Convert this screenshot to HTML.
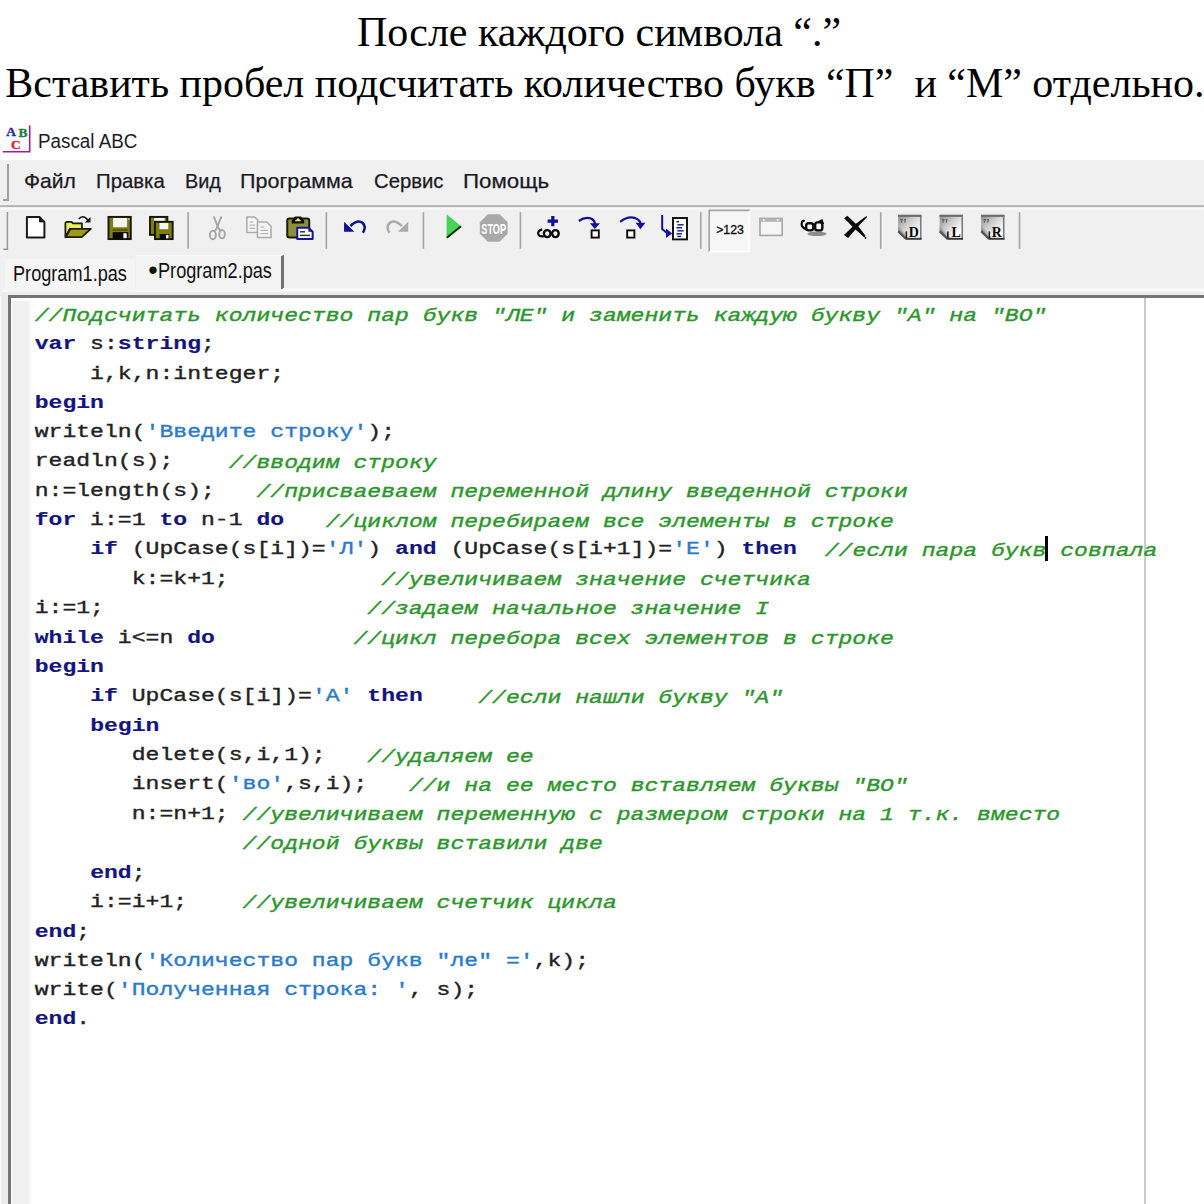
<!DOCTYPE html>
<html><head><meta charset="utf-8">
<style>
html,body{margin:0;padding:0;background:#fff;}
body{width:1204px;height:1204px;position:relative;overflow:hidden;font-family:"Liberation Sans",sans-serif;}
.h{position:absolute;font-family:"Liberation Serif",serif;font-size:42px;line-height:52px;color:#000;white-space:pre;}
#h1{left:356.9px;top:5.5px;}
#h2{left:5.3px;top:56.8px;font-size:41.94px;}
#title{position:absolute;left:37.6px;top:128.9px;font-size:19.5px;line-height:24px;color:#1c1c2c;white-space:pre;transform-origin:0 0;transform:scaleX(0.965);}
#menubar{position:absolute;left:0;top:160px;width:1204px;height:46px;background:#f0f0f0;}
#menubar span{position:absolute;top:9.1px;font-size:20.4px;-webkit-text-stroke:0.25px;line-height:24px;color:#1a1a24;white-space:pre;transform-origin:0 0;}
.grip{position:absolute;background:#a0a0a0;}
#toolbar{position:absolute;left:0;top:204.6px;width:1204px;height:50.4px;background:#f0f0f0;}
#tabs{position:absolute;left:0;top:255px;width:1204px;height:41px;background:#f0f0f0;}
.tab{position:absolute;font-size:22.4px;line-height:24px;color:#111;white-space:pre;transform-origin:0 0;transform:scaleX(0.81);}
#editor{position:absolute;left:7.5px;top:295.4px;width:1197px;height:909px;background:#fff;border-left:3px solid #757575;border-top:3.3px solid #757575;box-sizing:border-box;}
#gutter{position:absolute;left:0;top:3px;width:22px;height:908px;background:linear-gradient(to right,#fafafa 0,#f0f0f0 2.6px,#f0f0f0 16.4px,#fff 21.6px);}
#margin{position:absolute;left:1133.2px;top:0;width:2px;height:908px;background:#cbcbcb;}
pre{position:absolute;left:24.2px;top:1.5px;margin:0;font-family:"Liberation Mono",monospace;font-size:23.1px;line-height:36.27px;color:#222;transform:scaleY(0.81);transform-origin:0 0;-webkit-text-stroke:0.45px;}
.k{color:#14147e;font-weight:bold;-webkit-text-stroke:0.2px;}
.c{color:#2c962c;font-style:italic;position:relative;top:1.7px;}
.s{color:#2a7acc;}
#app{position:absolute;left:0;top:0;width:1204px;height:1204px;}
#caret{position:absolute;left:1044.7px;top:536px;width:3.2px;height:25.4px;background:#050505;}
</style></head><body>
<div class="h" id="h1">После каждого символа “.”</div>
<div class="h" id="h2">Вставить пробел подсчитать количество букв “П”  и “М” отдельно.</div>
<div id="app">
<svg style="position:absolute;left:0;top:120px" width="40" height="40" viewBox="0 120 40 40">
<path d="M29.7 125.6V151.7H2.7" fill="none" stroke="#a21aa2" stroke-width="1.6"/>
<text x="6.2" y="135.8" font-family="Liberation Serif,serif" font-weight="bold" font-size="13.4" fill="#2e2ea0" stroke="#2e2ea0" stroke-width="0.4">A</text>
<text x="18.4" y="137.4" font-family="Liberation Serif,serif" font-weight="bold" font-size="13.4" fill="#1e8040" stroke="#1e8040" stroke-width="0.4">B</text>
<text x="11" y="149.2" font-family="Liberation Serif,serif" font-weight="bold" font-size="13.4" fill="#e0202e" stroke="#e0202e" stroke-width="0.4">C</text>
</svg>
<div id="title">Pascal ABC</div>
<div id="menubar">
<div class="grip" style="left:7px;top:3.7px;width:1.6px;height:37px"></div>
<div class="grip" style="left:3px;top:39.3px;width:5.6px;height:1.5px"></div>
<span style="left:24.4px;transform:scaleX(1.035)">Файл</span><span style="left:95.6px;transform:scaleX(0.998)">Правка</span><span style="left:185px;transform:scaleX(0.975)">Вид</span><span style="left:240px;transform:scaleX(1.055)">Программа</span><span style="left:374.4px;transform:scaleX(0.995)">Сервис</span><span style="left:463.2px;transform:scaleX(1.095)">Помощь</span></div>
<div id="toolbar">
<svg style="position:absolute;left:0;top:0" width="1204" height="50.4" viewBox="0 204.6 1204 50.4">
<rect x="0" y="204.8" width="1204" height="2.1" fill="#b2b2b2"/>
<rect x="0" y="206.9" width="1204" height="2.4" fill="#f8f8f8"/>
<!-- grip -->
<path d="M7.3 211.6V248.8H3.3" fill="none" stroke="#989898" stroke-width="1.5"/>
<!-- separators -->
<g stroke="#a4a4a4" stroke-width="1.6">
<path d="M188 211.8V248.4"/><path d="M326.3 211.8V248.4"/><path d="M423.4 211.8V248.4"/><path d="M520.4 211.8V248.4"/><path d="M700.8 211.8V248.4"/><path d="M880.8 211.8V248.4"/><path d="M1019.6 211.8V248.4"/>
</g>
<!-- new -->
<path d="M26.8 216.6H39.4L44.3 221.5V237H26.8Z" fill="#fff" stroke="#1a1a1a" stroke-width="2" stroke-linejoin="round"/>
<path d="M39.4 216.6V221.5H44.3Z" fill="#1a1a1a" stroke="#1a1a1a" stroke-width="1"/>
<!-- open -->
<path d="M65.3 236.8V222.6L66.5 221.4H71.5L72.8 222.9H81.8V228.4H69.8Z" fill="#ecec5c" stroke="#1c1c00" stroke-width="1.8" stroke-linejoin="round"/>
<path d="M65.6 236.8L70.4 228.4H90.8L81.6 236.8Z" fill="#9c9c10" stroke="#1c1c00" stroke-width="1.8" stroke-linejoin="round"/>
<path d="M78.6 218.6Q82.6 214.4 86.4 218.2L88.6 220.4" fill="none" stroke="#111" stroke-width="1.6"/>
<path d="M90.4 216.6V222.2H84.6Z" fill="#111"/>
<!-- save -->
<rect x="108.4" y="216.5" width="22.3" height="22.2" fill="#7e7e0e" stroke="#161600" stroke-width="1.9"/>
<rect x="113" y="217.6" width="14" height="9.2" fill="#f6f6f6"/>
<rect x="112.4" y="229" width="15.4" height="1.3" fill="#4a4a08"/>
<rect x="112.6" y="231.7" width="15.6" height="7" fill="#0a0a0a"/>
<rect x="123.3" y="232.8" width="3.3" height="5" fill="#fff"/>
<rect x="128.2" y="218" width="1.2" height="1.4" fill="#e8e8e8"/>
<!-- save all -->
<rect x="149.9" y="216.5" width="17.4" height="18" fill="#7e7e0e" stroke="#161600" stroke-width="1.9"/>
<rect x="154" y="217.6" width="10.6" height="3" fill="#f6f6f6"/>
<rect x="154.9" y="221.4" width="17.7" height="17.3" fill="#7e7e0e" stroke="#161600" stroke-width="1.9"/>
<rect x="159.4" y="222.6" width="8.8" height="6.2" fill="#f6f6f6"/>
<rect x="159.6" y="233.6" width="9.6" height="5.2" fill="#0a0a0a"/>
<rect x="166" y="234.4" width="2.4" height="3.6" fill="#fff"/>
<!-- cut (disabled) -->
<g fill="none" stroke="#a6a6a6" stroke-width="1.9">
<path d="M213.6 216L218.6 228.4"/><path d="M221.4 216L216.4 228.4"/>
<ellipse cx="212.8" cy="234.6" rx="3" ry="4.2"/><ellipse cx="222" cy="233.8" rx="2.8" ry="4.2"/>
<path d="M216.4 228.4L214.6 231"/><path d="M218.6 228.4L220.6 230.4"/>
</g>
<!-- copy (disabled) -->
<g fill="#f4f4f4" stroke="#ababab" stroke-width="1.5" stroke-linejoin="round">
<path d="M246.8 216.6H254.6L257.6 219.6V232H246.8Z"/>
<path d="M257.4 221.6H266.8L271 225.8V237H257.4Z"/>
</g>
<g stroke="#b6b6b6" stroke-width="1.2"><path d="M249.6 221.6H253"/><path d="M249.6 224.8H255"/><path d="M249.6 228H255"/><path d="M260.4 226.6H264"/><path d="M260.4 230H268"/><path d="M260.4 233.2H268"/></g>
<!-- paste -->
<rect x="287.2" y="218.2" width="22" height="18.8" rx="2.2" fill="#8e8e3c" stroke="#1a1a00" stroke-width="2"/>
<path d="M291.6 223V220.4L295 216.2H301L304.2 220.4V223Z" fill="#0e0e00"/>
<path d="M294.6 220.8L298 217.6L301.4 220.8Z" fill="#e8e85c"/>
<path d="M297.2 227.3H308.4L312.6 231.4V238.6H297.2Z" fill="#fff" stroke="#14149c" stroke-width="2" stroke-linejoin="round"/>
<path d="M308.4 227.3V231.4H312.6Z" fill="#14149c"/>
<path d="M300 231.4H305" stroke="#333" stroke-width="1.5"/><path d="M300 235H310" stroke="#333" stroke-width="1.5"/>
<!-- undo -->
<path d="M344 221.4V231.4H354.4Z" fill="#10108e"/>
<path d="M350.4 225.6Q357.6 218.6 362.4 222.4Q366.8 226.4 362.8 232.4" fill="none" stroke="#10108e" stroke-width="2.5"/>
<!-- redo (disabled) -->
<path d="M408.2 221.4V231.4H397.8Z" fill="#ababab"/>
<path d="M401.8 225.6Q394.6 218.6 389.8 222.4Q385.4 226.4 389.4 232.4" fill="none" stroke="#ababab" stroke-width="2.5"/>
<!-- run -->
<path d="M446.6 213.9L461.1 225.9L446.6 238Z" fill="#46d456"/>
<path d="M446.8 237.4L461 225.8" stroke="#0c300c" stroke-width="2"/>
<!-- stop -->
<path d="M487.8 213.9H499.6L507.6 221.9V233.3L499.6 241.3H487.8L479.8 233.3V221.9Z" fill="#a9a9a9"/>
<text x="481.4" y="233" font-family="Liberation Sans,sans-serif" font-weight="bold" font-size="14.6" fill="#fff" transform="translate(481.2 0.5) scale(0.625 1) translate(-481.2 0)">STOP</text>
<!-- add watch -->
<path d="M552.8 215.6V225.8M547.6 220.7H558" stroke="#10109c" stroke-width="3.2"/>
<g fill="#f4f4f4" stroke="#0a0a0a" stroke-width="2.4">
<ellipse cx="547.2" cy="233.2" rx="3.3" ry="3.5"/><ellipse cx="555.4" cy="233.2" rx="3.3" ry="3.5"/>
<path d="M542.2 229Q537 230.6 538.4 234Q539.8 236.8 543.8 235.8" fill="none" stroke-width="2.2"/>
</g>
<!-- trace into -->
<path d="M578.8 220.6Q586 215.4 592 218.6Q595 220.6 595 224" fill="none" stroke="#10109c" stroke-width="2.2"/>
<path d="M589.8 222.8H600L594.9 228.6Z" fill="#10109c"/>
<rect x="591.6" y="230" width="7.2" height="7.2" fill="#fff" stroke="#0a0a0a" stroke-width="1.9"/>
<!-- step over -->
<path d="M620.2 221.4Q630 214 638 219.2Q640.4 221 640.6 223" fill="none" stroke="#10109c" stroke-width="2.2"/>
<path d="M635.6 222.4H645.4L640.4 228.8Z" fill="#10109c"/>
<rect x="627.2" y="230" width="7.2" height="7.2" fill="#fff" stroke="#0a0a0a" stroke-width="1.9"/>
<!-- run to cursor -->
<path d="M662.2 214.6V228.6L667 232.6" fill="none" stroke="#10109c" stroke-width="2"/>
<path d="M666 228.2L672.2 233.2L666 237.6Z" fill="#10109c"/>
<rect x="673" y="217.6" width="14" height="21.4" fill="#fff" stroke="#0a0a0a" stroke-width="1.9"/>
<g stroke="#10109c" stroke-width="1.4"><path d="M676.4 221.4H679"/><path d="M677.4 224.4H683.6"/><path d="M676.4 227.4H682"/><path d="M677.4 230.4H683.6"/><path d="M676.4 233.4H682"/><path d="M677.4 236H681"/></g>
<!-- pressed >123 -->
<rect x="708.4" y="209.2" width="41.4" height="42.4" fill="#f7f7f7"/>
<path d="M709.2 251.6V210H749.8" fill="none" stroke="#a2a2a2" stroke-width="1.6"/>
<path d="M709.2 251.2H749.4V210.4" fill="none" stroke="#fdfdfd" stroke-width="1.4"/>
<text x="716.2" y="234" font-family="Liberation Sans,sans-serif" font-size="13.4" fill="#111" stroke="#111" stroke-width="0.35" transform="translate(716.2 0) scale(0.92 1) translate(-716.2 0)">&gt;123</text>
<!-- window (gray) -->
<rect x="760" y="218" width="22.2" height="17" fill="#f6f6f6" stroke="#a6a6a6" stroke-width="1.6"/>
<rect x="760" y="218" width="22.2" height="3.4" fill="#b4b4b4"/>
<rect x="777" y="218.8" width="1.6" height="1.8" fill="#eee"/><rect x="763" y="218.8" width="1.6" height="1.8" fill="#eee"/>
<!-- glasses -->
<ellipse cx="817" cy="233.4" rx="9.6" ry="2.3" fill="#8c8c8c"/>
<g fill="#fff" stroke="#0a0a0a" stroke-width="2.4">
<rect x="806.2" y="222.8" width="7.2" height="7.2" rx="2.6"/><rect x="815.2" y="222" width="7.2" height="8" rx="2.4"/>
</g>
<path d="M806.4 229Q799.8 226.4 802.2 221.2Q803.4 220 804.6 221" fill="none" stroke="#0a0a0a" stroke-width="2.2"/>
<path d="M818.6 221.4L822 219.8L823.4 223.6" fill="#0a0a0a" stroke="#0a0a0a" stroke-width="1.6"/>
<!-- X -->
<path d="M844.2 217.8L847.4 215.4L858 225.4L865.4 235.2L864 236.4L854.6 228.4Z" fill="#0a0a0a"/>
<path d="M866.4 215.6L867 216.8L857.2 227L848.2 237.6L844 234.6L854.6 224.4Z" fill="#0a0a0a"/>
<path d="M861 232.6L865 236.6" stroke="#0a0a0a" stroke-width="1.4"/>
<circle cx="865.6" cy="237.6" r="0.9" fill="#0a0a0a"/>
<defs><linearGradient id="kg" x1="0" y1="0" x2="1" y2="1"><stop offset="0" stop-color="#888"/><stop offset="0.4" stop-color="#cfcfcf"/><stop offset="0.8" stop-color="#ffffff"/></linearGradient><linearGradient id="kd" x1="0" y1="1" x2="0.5" y2="0.5"><stop offset="0.3" stop-color="#4a4a4a"/><stop offset="1" stop-color="#4a4a4a" stop-opacity="0"/></linearGradient></defs>
<g transform="translate(897.6 0)">
<path d="M0.6 214.6H23.6V238.8H8.6L0.6 230.8Z" fill="url(#kg)"/>
<path d="M0.4 215.4H24" stroke="#6c6c6c" stroke-width="2.2"/>
<path d="M23.2 215V239" stroke="#7a7a7a" stroke-width="1.6"/>
<path d="M8.4 238.4H24" stroke="#3a3a3a" stroke-width="2"/>
<path d="M0.6 224L0.6 230.8L8.6 238.8L14 238.8Z" fill="url(#kd)"/><path d="M0.8 231L8.6 238.6" stroke="#555" stroke-width="2.4"/>
<path d="M8.8 231V238" stroke="#222" stroke-width="1.6"/>
<path d="M3 219.4H5.4M6.6 219.4H8.4M3.4 221.4H4.6M6.8 221.4H8" stroke="#444" stroke-width="1.2"/>
<text x="11.2" y="236.6" font-family="Liberation Serif,serif" font-weight="bold" font-size="14" fill="#0a0a0a">D</text>
</g>
<g transform="translate(939.1 0)">
<path d="M0.6 214.6H23.6V238.8H8.6L0.6 230.8Z" fill="url(#kg)"/>
<path d="M0.4 215.4H24" stroke="#6c6c6c" stroke-width="2.2"/>
<path d="M23.2 215V239" stroke="#7a7a7a" stroke-width="1.6"/>
<path d="M8.4 238.4H24" stroke="#3a3a3a" stroke-width="2"/>
<path d="M0.6 224L0.6 230.8L8.6 238.8L14 238.8Z" fill="url(#kd)"/><path d="M0.8 231L8.6 238.6" stroke="#555" stroke-width="2.4"/>
<path d="M8.8 231V238" stroke="#222" stroke-width="1.6"/>
<path d="M3 219.4H5.4M6.6 219.4H8.4M3.4 221.4H4.6M6.8 221.4H8" stroke="#444" stroke-width="1.2"/>
<text x="12.4" y="236.6" font-family="Liberation Serif,serif" font-weight="bold" font-size="14" fill="#0a0a0a">L</text>
</g>
<g transform="translate(980.6 0)">
<path d="M0.6 214.6H23.6V238.8H8.6L0.6 230.8Z" fill="url(#kg)"/>
<path d="M0.4 215.4H24" stroke="#6c6c6c" stroke-width="2.2"/>
<path d="M23.2 215V239" stroke="#7a7a7a" stroke-width="1.6"/>
<path d="M8.4 238.4H24" stroke="#3a3a3a" stroke-width="2"/>
<path d="M0.6 224L0.6 230.8L8.6 238.8L14 238.8Z" fill="url(#kd)"/><path d="M0.8 231L8.6 238.6" stroke="#555" stroke-width="2.4"/>
<path d="M8.8 231V238" stroke="#222" stroke-width="1.6"/>
<path d="M3 219.4H5.4M6.6 219.4H8.4M3.4 221.4H4.6M6.8 221.4H8" stroke="#444" stroke-width="1.2"/>
<text x="11.2" y="236.6" font-family="Liberation Serif,serif" font-weight="bold" font-size="14" fill="#0a0a0a">R</text>
</g>
</svg>
</div>
<div id="tabs">
<div style="position:absolute;left:5px;top:4.4px;width:130px;height:29.6px;background:#f5f5f5"></div>
<div style="position:absolute;left:136px;top:0.2px;width:148px;height:33.8px;background:#f3f3f3;border-top:1.6px solid #fbfbfb;border-right:3px solid #727272;box-sizing:border-box"></div>
<div class="tab" style="left:13.4px;top:7.1px">Program1.pas</div>
<div class="tab" style="left:148.2px;top:2.6px;font-size:27px;transform:none">•</div><div class="tab" style="left:158px;top:3.6px">Program2.pas</div>
<div style="position:absolute;left:283px;top:33.2px;width:921px;height:3.4px;background:linear-gradient(#f4f4f4,#fdfdfd 45%,#fdfdfd 60%,#f0f0f0)"></div>
<div style="position:absolute;left:2px;top:34px;width:281px;height:2.6px;background:#f6f6f6"></div>
<div style="position:absolute;left:1.4px;top:36.6px;width:1203px;height:4px;background:#ececec"></div>
</div>
<div style="position:absolute;left:1.2px;top:296px;width:6.4px;height:908px;background:#ececec"></div>
<div id="editor"><div id="gutter"></div><div id="margin"></div>
<pre><span class="c">//Подсчитать количество пар букв "ЛЕ" и заменить каждую букву "А" на "ВО"</span>
<span class="k">var</span> s:<span class="k">string</span>;
    i,k,n:integer;
<span class="k">begin</span>
writeln(<span class="s">'Введите строку'</span>);
readln(s);    <span class="c">//вводим строку</span>
n:=length(s);   <span class="c">//присваеваем переменной длину введенной строки</span>
<span class="k">for</span> i:=1 <span class="k">to</span> n-1 <span class="k">do</span>   <span class="c">//циклом перебираем все элементы в строке</span>
    <span class="k">if</span> (UpCase(s[i])=<span class="s">'Л'</span>) <span class="k">and</span> (UpCase(s[i+1])=<span class="s">'Е'</span>) <span class="k">then</span>  <span class="c">//если пара букв совпала</span>
       k:=k+1;           <span class="c">//увеличиваем значение счетчика</span>
i:=1;                   <span class="c">//задаем начальное значение I</span>
<span class="k">while</span> i&lt;=n <span class="k">do</span>          <span class="c">//цикл перебора всех элементов в строке</span>
<span class="k">begin</span>
    <span class="k">if</span> UpCase(s[i])=<span class="s">'А'</span> <span class="k">then</span>    <span class="c">//если нашли букву "А"</span>
    <span class="k">begin</span>
       delete(s,i,1);   <span class="c">//удаляем ее</span>
       insert(<span class="s">'во'</span>,s,i);   <span class="c">//и на ее место вставляем буквы "ВО"</span>
       n:=n+1; <span class="c">//увеличиваем переменную с размером строки на 1 т.к. вместо</span>
               <span class="c">//одной буквы вставили две</span>
    <span class="k">end</span>;
    i:=i+1;    <span class="c">//увеличиваем счетчик цикла</span>
<span class="k">end</span>;
writeln(<span class="s">'Количество пар букв "ле" ='</span>,k);
write(<span class="s">'Полученная строка: '</span>, s);
<span class="k">end</span>.</pre>
</div>
<div id="caret"></div>
</div>
</body></html>
